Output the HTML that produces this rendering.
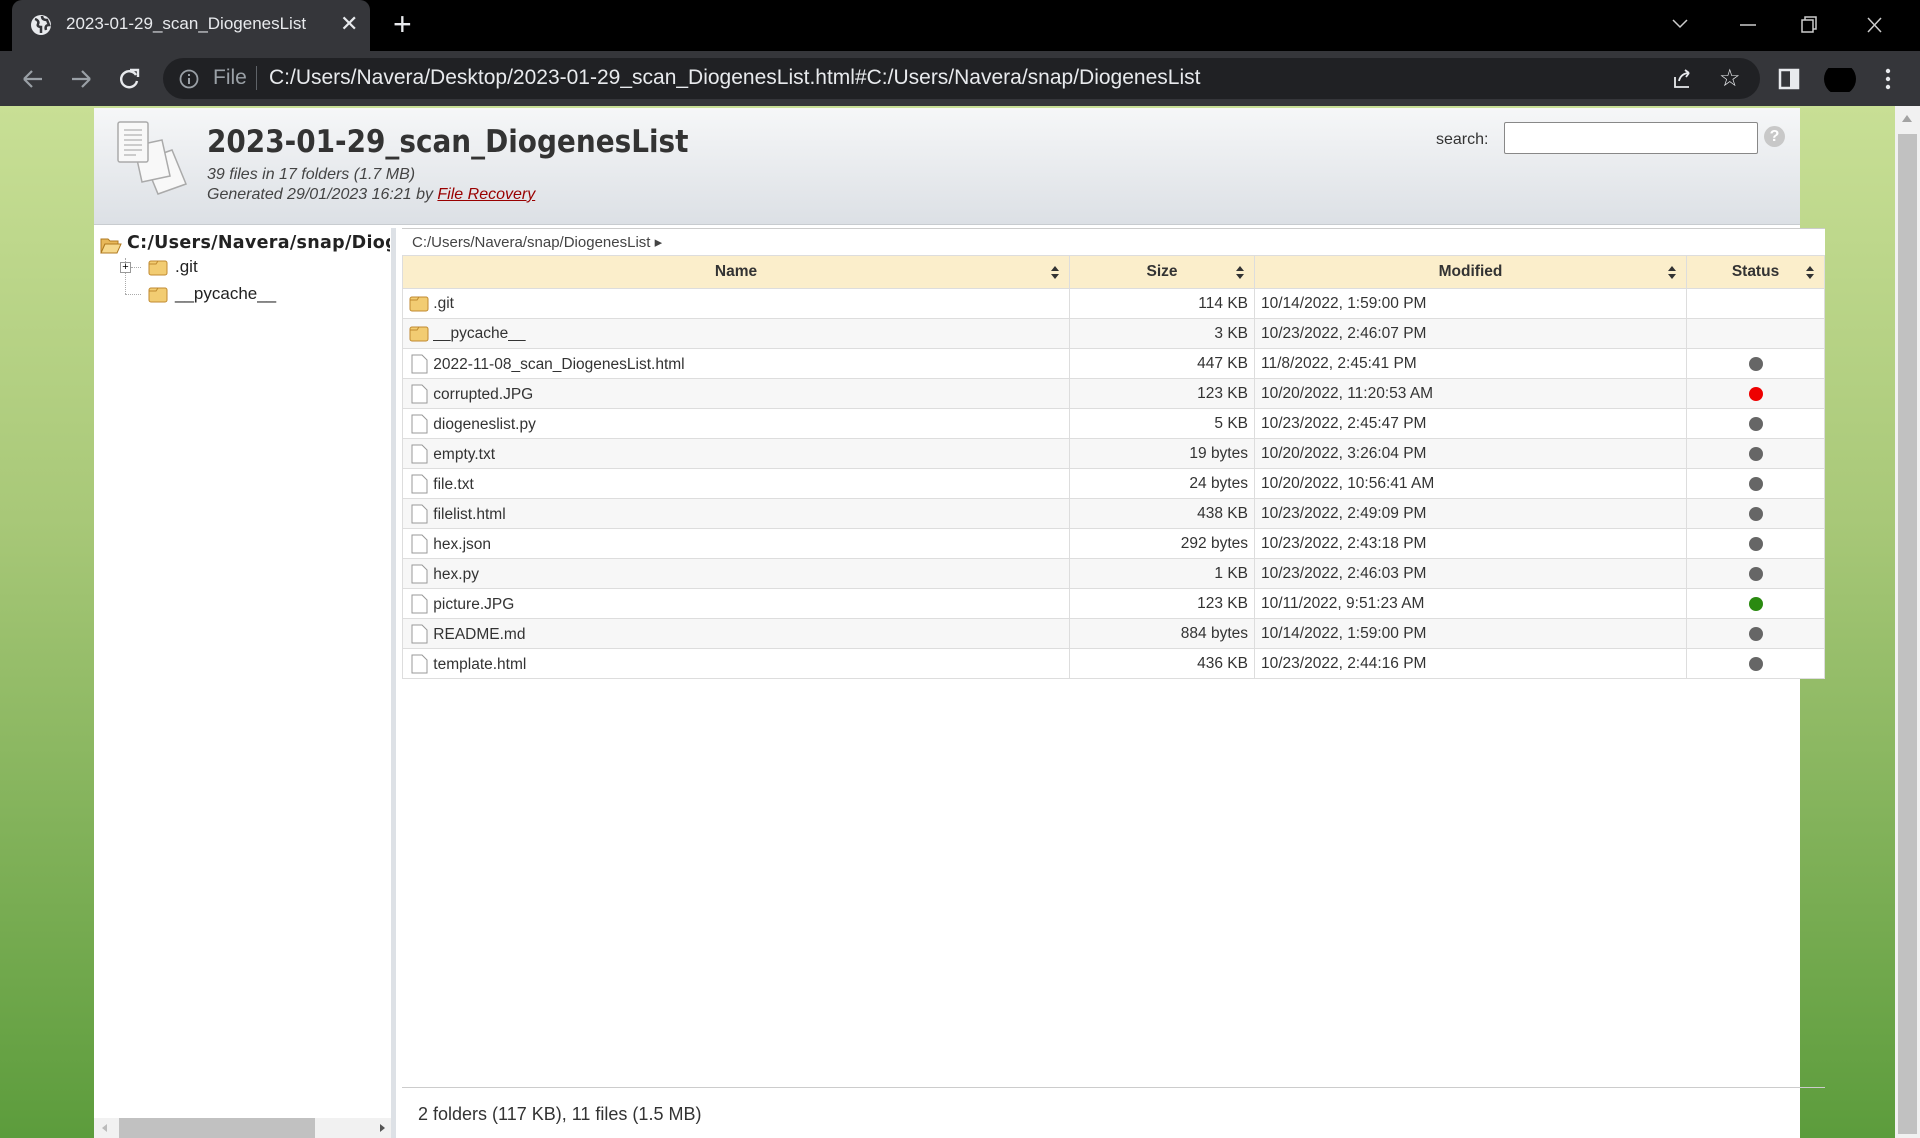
<!DOCTYPE html>
<html><head><meta charset="utf-8">
<style>
*{box-sizing:border-box;margin:0;padding:0}
body{width:1920px;height:1138px;overflow:hidden;font-family:"Liberation Sans",sans-serif;background:#fff;position:relative}
.tabbar{position:absolute;left:0;top:0;width:1920px;height:51px;background:#000}
.tab{position:absolute;left:12px;top:0;width:358px;height:51px;background:#35363a;border-radius:10px 10px 0 0;color:#e8eaed;font-size:17px}
.toolbar{position:absolute;left:0;top:51px;width:1920px;height:55px;background:#35363a}
.omni{position:absolute;left:163px;top:7px;width:1597px;height:41px;background:#202124;border-radius:21px;color:#e8eaed;font-size:21px}
.page{position:absolute;left:0;top:106px;width:1895px;height:1032px;background:linear-gradient(#c8df95,#a8c878 40%,#5c9c3c)}
.vscroll{position:absolute;left:1895px;top:106px;width:25px;height:1032px;background:#f1f1f1}
.main{position:absolute;left:94px;top:108px;width:1706px;height:1030px;background:#fff}
.hdr{position:absolute;left:0;top:0;width:1706px;height:117px;background:linear-gradient(#f6f7f8,#dce0e5);border-bottom:1px solid #c8ccd0}
.tree{position:absolute;left:0;top:120px;width:302px;height:910px;border-right:5px solid #dde1e6;background:#fff}
.right{position:absolute;left:402px;top:228px;width:1423px;height:910px}
table{border-collapse:collapse;width:1423px;font-size:15.5px;color:#333}
th{height:33px;background:#fbeecb;font-weight:bold;border:1px solid #ddd;position:relative}
td{height:30px;border:1px solid #ddd;padding:0 6px;background:#fff}
tr:nth-child(odd) td{background:#f7f7f7}
.sz{text-align:right}
.dot{display:block;margin:0 auto;width:14px;height:14px;border-radius:7px;background:#666}
.arr{position:absolute;right:10px;top:9px;width:8px;height:15px}
</style></head><body>
<div class="tabbar">
 <div class="tab">
  <svg style="position:absolute;left:18px;top:14px" width="22" height="22" viewBox="0 0 22 22"><circle cx="11" cy="11" r="10" fill="#e8eaed"/><path d="M5 5c3 1 4 3 3 5s1 3 3 3v6M12 2c0 3 2 4 5 4l2 5c-3 0-4 2-3 5" stroke="#35363a" stroke-width="2.5" fill="none"/></svg>
  <span style="position:absolute;left:54px;top:14px">2023-01-29_scan_DiogenesList</span>
  <span style="position:absolute;left:328px;top:11px;font-size:22px">✕</span>
 </div>
 <span style="position:absolute;left:393px;top:6px;color:#e8eaed;font-size:32px">+</span>
 <svg style="position:absolute;left:1670px;top:14px" width="220" height="22"><path d="M3 6l7 7 7-7" stroke="#ccc" fill="none" stroke-width="1.5"/><path d="M70 11h16" stroke="#ccc" stroke-width="1.5"/><rect x="132" y="6" width="11" height="12" stroke="#ccc" fill="none" stroke-width="1.5"/><path d="M135 6V3h11v12h-3" stroke="#ccc" fill="none" stroke-width="1.5"/><path d="M198 4l13 14M211 4l-13 14" stroke="#ccc" stroke-width="1.5"/></svg>
</div>
<div class="toolbar">
 <svg style="position:absolute;left:20px;top:16px" width="120" height="24"><path d="M4 12h18M4 12l8-8M4 12l8 8" stroke="#9aa0a6" stroke-width="2.2" fill="none"/><path d="M52 12h18M70 12l-8-8M70 12l-8 8" stroke="#9aa0a6" stroke-width="2.2" fill="none"/><path d="M116 8a8 8 0 1 0 1 6" stroke="#e8eaed" stroke-width="2.4" fill="none"/><path d="M110 3h8v7" stroke="#e8eaed" stroke-width="2.4" fill="none"/></svg>
 <div class="omni">
  <svg style="position:absolute;left:16px;top:11px" width="20" height="20"><circle cx="10" cy="10" r="8.5" stroke="#9aa0a6" stroke-width="1.8" fill="none"/><path d="M10 9v6M10 5v2" stroke="#9aa0a6" stroke-width="2"/></svg>
  <span style="position:absolute;left:50px;top:8px;color:#9aa0a6">File</span>
  <span style="position:absolute;left:93px;top:8px;width:1px;height:24px;background:#5f6368"></span>
  <span style="position:absolute;left:106px;top:8px">C:/Users/Navera/Desktop/2023-01-29_scan_DiogenesList.html#C:/Users/Navera/snap/DiogenesList</span>
  <svg style="position:absolute;left:1508px;top:9px" width="24" height="24"><path d="M4 10v10h14M8 14c1-5 5-8 10-8M18 6l-4-3M18 6l-3 4" stroke="#e8eaed" stroke-width="1.8" fill="none"/></svg>
  <span style="position:absolute;left:1556px;top:6px;color:#e8eaed;font-size:24px">☆</span>
 </div>
 <svg style="position:absolute;left:1778px;top:17px" width="140" height="24"><rect x="2" y="2" width="18" height="18" stroke="#e8eaed" stroke-width="2.5" fill="none"/><rect x="12" y="2" width="8" height="18" fill="#e8eaed"/><circle cx="62" cy="11" r="16" fill="#000"/><circle cx="110" cy="3" r="2.2" fill="#e8eaed"/><circle cx="110" cy="11" r="2.2" fill="#e8eaed"/><circle cx="110" cy="19" r="2.2" fill="#e8eaed"/></svg>
</div>
<div class="page"></div>
<div class="vscroll"><div style="position:absolute;left:3px;top:28px;width:19px;height:1000px;background:#c1c1c1"></div><div style="position:absolute;left:7px;top:9px;border:5px solid transparent;border-bottom:7px solid #a3a3a3;border-top:0"></div></div>
<div class="main">
 <div class="hdr">
  <svg style="position:absolute;left:22px;top:12px" width="76" height="76" viewBox="0 0 76 76">
   <g stroke="#aaa" fill="#f8f8f8" stroke-width="1.5"><path d="M28 40l28-10 14 34-28 10z"/><path d="M18 26l28-6 8 36-28 6z"/><rect x="2" y="2" width="30" height="40" rx="2"/></g>
   <g stroke="#ccc" stroke-width="2"><path d="M8 10h18M8 15h18M8 20h18M8 25h18M8 30h18M8 35h12"/></g>
  </svg>
  <div style="position:absolute;left:113px;top:16px;font-size:31px;font-weight:bold;color:#333;font-family:'DejaVu Sans Condensed','Liberation Sans',sans-serif">2023-01-29_scan_DiogenesList</div>
  <div style="position:absolute;left:113px;top:57px;font-size:16px;font-style:italic;color:#444;line-height:20px">39 files in 17 folders (1.7 MB)<br>Generated 29/01/2023 16:21 by <span style="color:#900;text-decoration:underline">File Recovery</span></div>
  <span style="position:absolute;left:1342px;top:23px;font-size:16px;color:#333">search:</span>
  <div style="position:absolute;left:1410px;top:14px;width:254px;height:32px;border:1px solid #888;border-radius:2px;background:#fff"></div>
  <div style="position:absolute;left:1670px;top:18px;width:21px;height:21px;border-radius:11px;background:#c8c8c8;color:#fff;font-weight:bold;font-size:16px;text-align:center;line-height:21px">?</div>
 </div>
 <div class="tree">
  <svg style="position:absolute;left:6px;top:8px" width="22" height="18"><path d="M1 3h7l2 2h8v3H5L1 17z" fill="#e8b85a" stroke="#b07a20"/><path d="M5 8h16l-4 9H1z" fill="#f6d88c" stroke="#b07a20"/></svg>
  <div style="position:absolute;left:33px;top:5px;font-size:17.5px;font-weight:bold;color:#222;font-family:'DejaVu Sans','Liberation Sans',sans-serif;white-space:nowrap;width:263px;overflow:hidden;letter-spacing:0.3px">C:/Users/Navera/snap/DiogenesList</div>
  <div style="position:absolute;left:31px;top:30px;width:1px;height:36px;border-left:1px dotted #aaa"></div>
  <div style="position:absolute;left:26px;top:34px;width:11px;height:11px;border:1px solid #999;background:#fff;font-size:11px;line-height:8px;text-align:center">+</div>
  <div style="position:absolute;left:37px;top:39px;width:10px;border-top:1px dotted #aaa"></div>
  <div style="position:absolute;left:31px;top:66px;width:16px;border-top:1px dotted #aaa"></div>
  <svg style="position:absolute;left:54px;top:30px" width="20" height="18"><rect x="1" y="3" width="18" height="14" rx="2" fill="#f2cc72" stroke="#c08a30"/><path d="M1 6h7l2-3" stroke="#c08a30" fill="none"/></svg>
  <div style="position:absolute;left:81px;top:29px;font-size:17px;color:#222">.git</div>
  <svg style="position:absolute;left:54px;top:57px" width="20" height="18"><rect x="1" y="3" width="18" height="14" rx="2" fill="#f2cc72" stroke="#c08a30"/><path d="M1 6h7l2-3" stroke="#c08a30" fill="none"/></svg>
  <div style="position:absolute;left:81px;top:56px;font-size:17px;color:#222">__pycache__</div>
  <div style="position:absolute;left:0;top:890px;width:297px;height:20px;background:#f1f1f1"><div style="position:absolute;left:25px;top:0;width:196px;height:20px;background:#c1c1c1"></div><div style="position:absolute;left:8px;top:6px;border:4px solid transparent;border-right:5px solid #bbb;border-left:0"></div><div style="position:absolute;left:286px;top:6px;border:4px solid transparent;border-left:5px solid #555;border-right:0"></div></div>
 </div>
</div>
<div class="right">
 <div style="height:27px;background:#fff;font-size:15px;color:#444;padding:4px 10px;border-top:1px solid #ccc">C:/Users/Navera/snap/DiogenesList ▸</div>
 <table>
  <tr><th style="width:667px">Name<svg class="arr"><path d="M0 6l4-5 4 5zM0 9l4 5 4-5z" fill="#333"/></svg></th><th style="width:185px">Size<svg class="arr"><path d="M0 6l4-5 4 5zM0 9l4 5 4-5z" fill="#333"/></svg></th><th style="width:432px">Modified<svg class="arr"><path d="M0 6l4-5 4 5zM0 9l4 5 4-5z" fill="#333"/></svg></th><th>Status<svg class="arr"><path d="M0 6l4-5 4 5zM0 9l4 5 4-5z" fill="#333"/></svg></th></tr>
  <tr><td><svg width="20" height="18" style="vertical-align:-4px"><rect x="1" y="3" width="18" height="14" rx="2" fill="#f2cc72" stroke="#c08a30"/><path d="M1 6h7l2-3" stroke="#c08a30" fill="none"/></svg> .git</td><td class="sz">114 KB</td><td>10/14/2022, 1:59:00 PM</td><td></td></tr>
  <tr><td><svg width="20" height="18" style="vertical-align:-4px"><rect x="1" y="3" width="18" height="14" rx="2" fill="#f2cc72" stroke="#c08a30"/><path d="M1 6h7l2-3" stroke="#c08a30" fill="none"/></svg> __pycache__</td><td class="sz">3 KB</td><td>10/23/2022, 2:46:07 PM</td><td></td></tr>
  <tr><td><svg width="20" height="20" style="vertical-align:-5px"><path d="M3 1h10l5 5v13H3z" fill="#fff" stroke="#999"/></svg> 2022-11-08_scan_DiogenesList.html</td><td class="sz">447 KB</td><td>11/8/2022, 2:45:41 PM</td><td><i class="dot"></i></td></tr>
  <tr><td><svg width="20" height="20" style="vertical-align:-5px"><path d="M3 1h10l5 5v13H3z" fill="#fff" stroke="#999"/></svg> corrupted.JPG</td><td class="sz">123 KB</td><td>10/20/2022, 11:20:53 AM</td><td><i class="dot" style="background:#e00"></i></td></tr>
  <tr><td><svg width="20" height="20" style="vertical-align:-5px"><path d="M3 1h10l5 5v13H3z" fill="#fff" stroke="#999"/></svg> diogeneslist.py</td><td class="sz">5 KB</td><td>10/23/2022, 2:45:47 PM</td><td><i class="dot"></i></td></tr>
  <tr><td><svg width="20" height="20" style="vertical-align:-5px"><path d="M3 1h10l5 5v13H3z" fill="#fff" stroke="#999"/></svg> empty.txt</td><td class="sz">19 bytes</td><td>10/20/2022, 3:26:04 PM</td><td><i class="dot"></i></td></tr>
  <tr><td><svg width="20" height="20" style="vertical-align:-5px"><path d="M3 1h10l5 5v13H3z" fill="#fff" stroke="#999"/></svg> file.txt</td><td class="sz">24 bytes</td><td>10/20/2022, 10:56:41 AM</td><td><i class="dot"></i></td></tr>
  <tr><td><svg width="20" height="20" style="vertical-align:-5px"><path d="M3 1h10l5 5v13H3z" fill="#fff" stroke="#999"/></svg> filelist.html</td><td class="sz">438 KB</td><td>10/23/2022, 2:49:09 PM</td><td><i class="dot"></i></td></tr>
  <tr><td><svg width="20" height="20" style="vertical-align:-5px"><path d="M3 1h10l5 5v13H3z" fill="#fff" stroke="#999"/></svg> hex.json</td><td class="sz">292 bytes</td><td>10/23/2022, 2:43:18 PM</td><td><i class="dot"></i></td></tr>
  <tr><td><svg width="20" height="20" style="vertical-align:-5px"><path d="M3 1h10l5 5v13H3z" fill="#fff" stroke="#999"/></svg> hex.py</td><td class="sz">1 KB</td><td>10/23/2022, 2:46:03 PM</td><td><i class="dot"></i></td></tr>
  <tr><td><svg width="20" height="20" style="vertical-align:-5px"><path d="M3 1h10l5 5v13H3z" fill="#fff" stroke="#999"/></svg> picture.JPG</td><td class="sz">123 KB</td><td>10/11/2022, 9:51:23 AM</td><td><i class="dot" style="background:#2a8a10"></i></td></tr>
  <tr><td><svg width="20" height="20" style="vertical-align:-5px"><path d="M3 1h10l5 5v13H3z" fill="#fff" stroke="#999"/></svg> README.md</td><td class="sz">884 bytes</td><td>10/14/2022, 1:59:00 PM</td><td><i class="dot"></i></td></tr>
  <tr><td><svg width="20" height="20" style="vertical-align:-5px"><path d="M3 1h10l5 5v13H3z" fill="#fff" stroke="#999"/></svg> template.html</td><td class="sz">436 KB</td><td>10/23/2022, 2:44:16 PM</td><td><i class="dot"></i></td></tr>
 </table>
 <div style="position:absolute;left:0;top:859px;width:1423px;border-top:1px solid #ccc"></div>
 <div style="position:absolute;left:16px;top:876px;font-size:18px;color:#333">2 folders (117 KB), 11 files (1.5 MB)</div>
</div>
</body></html>
